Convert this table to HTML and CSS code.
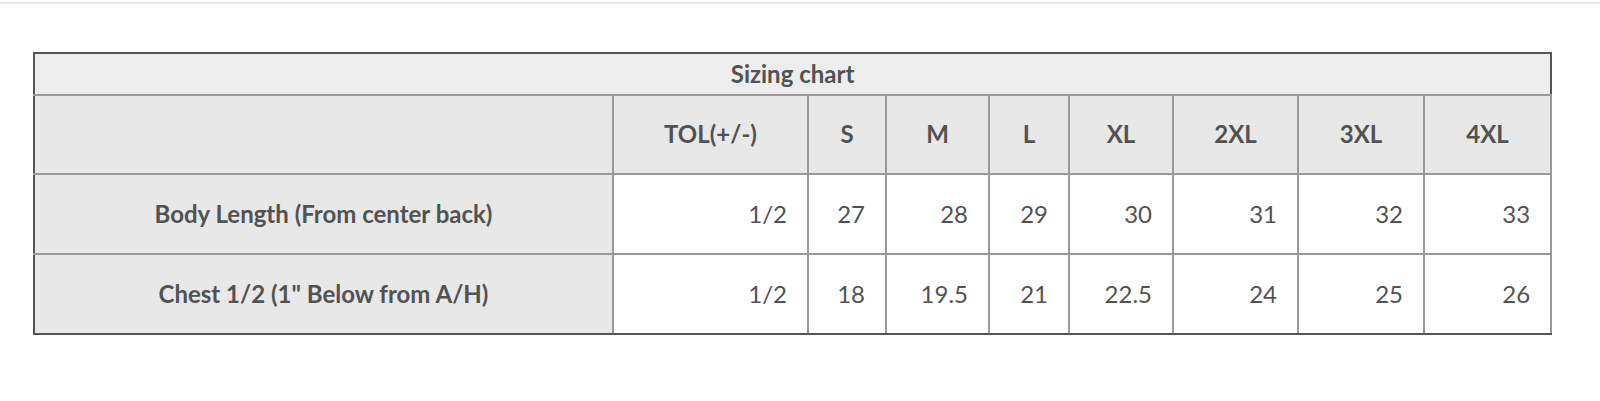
FILE: index.html
```html
<!DOCTYPE html>
<html>
<head>
<meta charset="utf-8">
<link rel="stylesheet" href="styles.css">
</head>
<body>
<div class="topline"></div>
<div class="wrap">
<table class="chart">
  <colgroup>
    <col class="c-label"><col class="c-tol"><col class="c-s"><col class="c-m"><col class="c-l"><col class="c-xl"><col class="c-2xl"><col class="c-3xl"><col class="c-4xl">
  </colgroup>
  <thead>
    <tr class="title-row"><th colspan="9" class="title">Sizing chart</th></tr>
    <tr class="head-row">
      <th class="first"></th><th>TOL(+/-)</th><th>S</th><th>M</th><th>L</th><th>XL</th><th>2XL</th><th>3XL</th><th class="last">4XL</th>
    </tr>
  </thead>
  <tbody>
    <tr>
      <th class="first">Body Length (From center back)</th><td>1/2</td><td>27</td><td>28</td><td>29</td><td>30</td><td>31</td><td>32</td><td class="last">33</td>
    </tr>
    <tr class="bottom-row">
      <th class="first">Chest 1/2 (1" Below from A/H)</th><td>1/2</td><td>18</td><td>19.5</td><td>21</td><td>22.5</td><td>24</td><td>25</td><td class="last">26</td>
    </tr>
  </tbody>
</table>
</div>
</body>
</html>
```
FILE: styles.css
```css
html, body {
  margin: 0;
  padding: 0;
  background: #fff;
}
body {
  font-family: Lato, "Open Sans", sans-serif;
  color: #525252;
}
.topline {
  height: 2px;
  margin-top: 2px;
  background: #e8e8e8;
}
.wrap {
  padding: 48px 0 0 33px;
}
.chart {
  width: 1517px;
  table-layout: fixed;
  border-collapse: collapse;
  border: 2px solid #555;
}
.c-label { width: 579px; }
.c-tol { width: 195px; }
.c-s { width: 78px; }
.c-m { width: 103px; }
.c-l { width: 80px; }
.c-xl { width: 104px; }
.c-2xl { width: 125px; }
.c-3xl { width: 126px; }
.c-4xl { width: 127px; }
.chart th, .chart td {
  border: 2px solid #9a9a9a;
  padding: 0;
  font-size: 24px;
  line-height: 1.2;
}
.chart th {
  font-weight: bold;
  background: #e8e8e8;
  text-align: center;
}
.chart td {
  background: #fff;
  text-align: right;
  padding-right: 20px;
  font-weight: normal;
}
.title-row th.title {
  background: #ededed;
  height: 40px;
  border: 2px solid #555;
  border-bottom-color: #9a9a9a;
}
.head-row th {
  height: 77px;
}
.chart tbody th, .chart tbody td {
  height: 78px;
}
.chart .first {
  border-left: 2px solid #555;
}
.chart .last {
  border-right: 2px solid #9a9a9a;
}
.bottom-row th, .bottom-row td {
  border-bottom: 2px solid #555;
}
```
